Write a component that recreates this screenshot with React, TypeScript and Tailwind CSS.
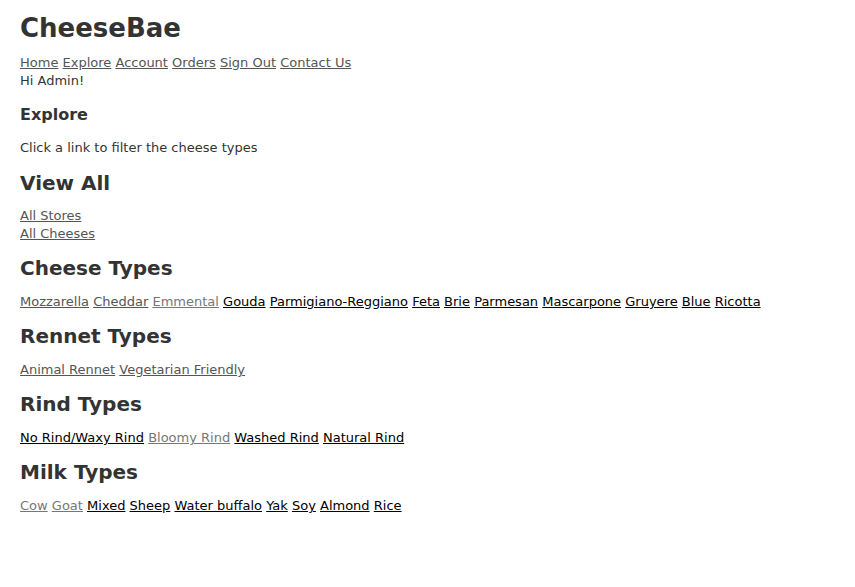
const nav = ['Home', 'Explore', 'Account', 'Orders', 'Sign Out', 'Contact Us'];

type Item = { name: string; seen?: 'dark' | 'light' };

const cheeseTypes: Item[] = [
  { name: 'Mozzarella', seen: 'dark' },
  { name: 'Cheddar', seen: 'dark' },
  { name: 'Emmental', seen: 'light' },
  { name: 'Gouda' },
  { name: 'Parmigiano-Reggiano' },
  { name: 'Feta' },
  { name: 'Brie' },
  { name: 'Parmesan' },
  { name: 'Mascarpone' },
  { name: 'Gruyere' },
  { name: 'Blue' },
  { name: 'Ricotta' },
];

const rennetTypes: Item[] = [
  { name: 'Animal Rennet', seen: 'dark' },
  { name: 'Vegetarian Friendly', seen: 'dark' },
];

const rindTypes: Item[] = [
  { name: 'No Rind/Waxy Rind' },
  { name: 'Bloomy Rind', seen: 'light' },
  { name: 'Washed Rind' },
  { name: 'Natural Rind' },
];

const milkTypes: Item[] = [
  { name: 'Cow', seen: 'light' },
  { name: 'Goat', seen: 'light' },
  { name: 'Mixed' },
  { name: 'Sheep' },
  { name: 'Water buffalo' },
  { name: 'Yak' },
  { name: 'Soy' },
  { name: 'Almond' },
  { name: 'Rice' },
];

function LinkRow({ items }: { items: Item[] }) {
  return (
    <p className="mt-[13px] leading-[18px]">
      {items.map((item, i) => (
        <span key={item.name}>
          <a
            href="#"
            className={`underline ${
              item.seen === 'dark'
                ? 'text-[#555]'
                : item.seen === 'light'
                ? 'text-[#777]'
                : 'text-black'
            }`}
          >
            {item.name}
          </a>
          {i < items.length - 1 ? ' ' : ''}
        </span>
      ))}
    </p>
  );
}

function Section({ title, items }: { title: string; items: Item[] }) {
  return (
    <div>
      <h2 className="mt-[13px] text-[20px] font-bold leading-6">{title}</h2>
      <LinkRow items={items} />
    </div>
  );
}

export default function App() {
  return (
    <div className="min-h-screen bg-white px-5 pt-[13px] text-[13px] text-[#333] font-['DejaVu_Sans',Verdana,sans-serif]">
      <h1 className="text-[26px] font-bold leading-[30px]">CheeseBae</h1>

      <div className="mt-[11px] leading-[18px]">
        {nav.map((n, i) => (
          <span key={n}>
            <a href="#" className="text-[#555] underline">
              {n}
            </a>
            {i < nav.length - 1 ? ' ' : ''}
          </span>
        ))}
      </div>
      <p className="leading-[18px]">Hi Admin!</p>

      <h3 className="mt-[15px] text-[16px] font-bold leading-5">Explore</h3>
      <p className="mt-[14px] leading-[18px]">Click a link to filter the cheese types</p>

      <h2 className="mt-[14px] text-[20px] font-bold leading-6">View All</h2>
      <div className="mt-3 leading-[18px]">
        <a href="#" className="block w-fit text-[#555] underline">
          All Stores
        </a>
        <a href="#" className="block w-fit text-[#555] underline">
          All Cheeses
        </a>
      </div>

      <Section title="Cheese Types" items={cheeseTypes} />
      <Section title="Rennet Types" items={rennetTypes} />
      <Section title="Rind Types" items={rindTypes} />
      <Section title="Milk Types" items={milkTypes} />
    </div>
  );
}
